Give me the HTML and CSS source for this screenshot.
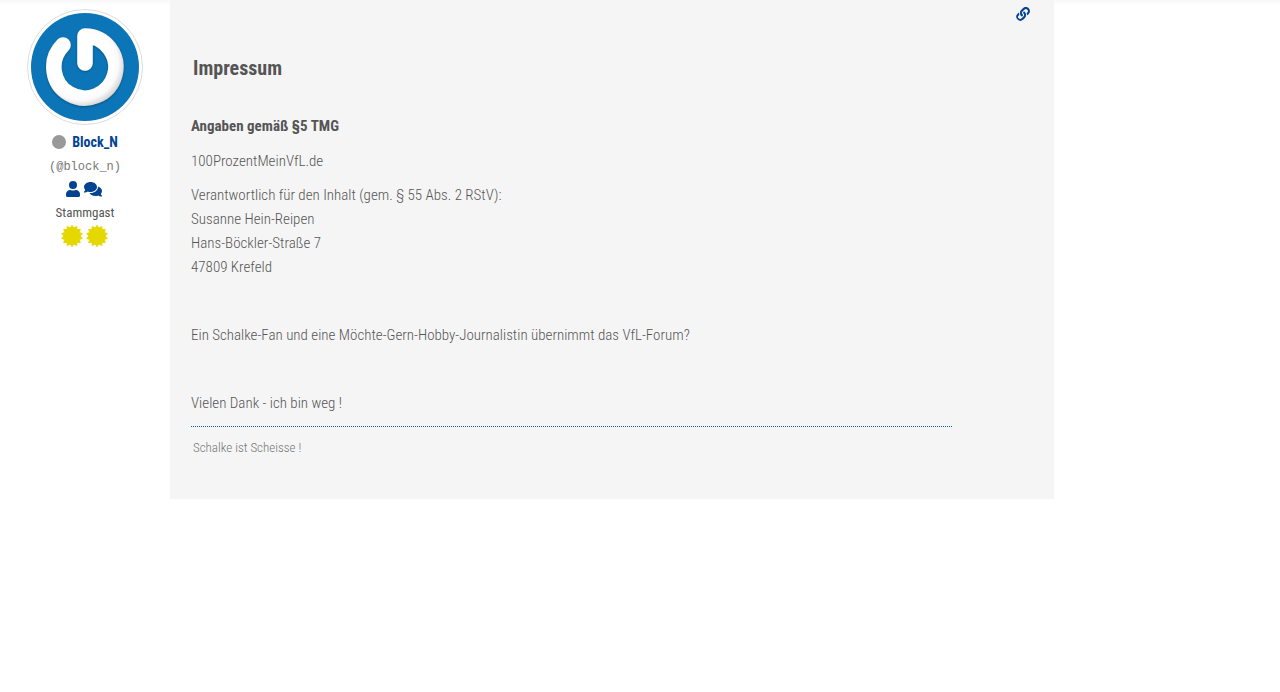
FILE: index.html
```html
<!DOCTYPE html>
<html lang="de">
<head>
<meta charset="utf-8">
<title>Impressum</title>
<link rel="stylesheet" href="styles.css">
</head>
<body>
<article class="post">
  <aside class="author">
    <div class="avatar">
      <svg viewBox="0 0 108 108" role="img" aria-label="Block_N">
        <defs>
          <filter id="shade" x="-20%" y="-20%" width="140%" height="140%">
            <feDropShadow dx="0" dy="1" stdDeviation="1" flood-color="#033a60" flood-opacity=".6"/>
          </filter>
          <radialGradient id="ring" gradientUnits="userSpaceOnUse" cx="50" cy="50" r="44">
            <stop offset=".7" stop-color="#fff"/>
            <stop offset=".85" stop-color="#fafafa"/>
            <stop offset="1" stop-color="#d5d5d5"/>
          </radialGradient>
        </defs>
        <circle cx="54" cy="54" r="54" fill="#0b75b7"/>
        <path d="M32 32A31 31 0 1 0 54 23V50" fill="none" stroke="url(#ring)" stroke-width="15.500" stroke-linecap="round" stroke-linejoin="round" filter="url(#shade)"/>
      </svg>
    </div>
    <div class="name"><span class="status"></span><a href="#">Block_N</a></div>
    <div class="nick">(@block_n)</div>
    <div class="links">
      <a href="#" aria-label="Profil"><svg class="user" viewBox="0 0 448 512"><path d="M224 256a128 128 0 1 0 0-256 128 128 0 0 0 0 256zm90 32h-17a174 174 0 0 1-146 0h-17A134 134 0 0 0 0 422v42c0 27 21 48 48 48h352c27 0 48-21 48-48v-42a134 134 0 0 0-134-134z"/></svg></a>
      <a href="#" aria-label="Beiträge"><svg class="chat" viewBox="0 0 576 512"><path d="M416 192c0-88-93-160-208-160S0 104 0 192c0 34 14 66 38 92-13 30-36 55-36 55a16 16 0 0 0 12 29c44 0 80-16 104-33 27 11 58 17 90 17 115 0 208-72 208-160zm122 220c24-26 38-58 38-92 0-67-54-124-129-148 1 7 1 13 1 20 0 106-108 192-240 192-11 0-21-1-32-2 32 57 106 98 192 98 32 0 63-6 90-17 24 17 60 33 104 33a16 16 0 0 0 12-29s-23-25-36-55z"/></svg></a>
    </div>
    <div class="rank">Stammgast</div>
    <div class="stars">
      <svg viewBox="-12 -12 24 24"><use href="#badge"/></svg>
      <svg viewBox="-12 -12 24 24"><path id="badge" d="M0-10.800 1.800-8 4.700-9.700 5.100-6.400 8.400-6.700 7.400-3.600 10.500-2.400 8.200 0 10.500 2.400 7.400 3.600 8.400 6.700 5.100 6.400 4.700 9.700 1.800 8 0 10.800-1.800 8-4.700 9.700-5.100 6.400-8.400 6.700-7.400 3.600-10.500 2.400-8.200 0-10.500-2.400-7.400-3.600-8.400-6.700-5.100-6.400-4.700-9.700-1.800-8Z" stroke="currentColor" stroke-width=".8" stroke-linejoin="round"/></svg>
    </div>
  </aside>
  <section class="content">
    <a class="permalink" href="#" aria-label="Link zum Beitrag"><svg viewBox="0 0 512 512"><path d="M327 185c59 60 59 155 0 214l-67 67a152 152 0 0 1-214-214l37-37c10-10 27-3 27 11 1 18 4 35 10 52 2 6 1 12-4 17l-13 13a72 72 0 1 0 101 102l67-67a72 72 0 0 0-11-111 16 16 0 0 1-7-13c0-10 3-21 12-29l21-21c5-6 14-6 21-2 7 5 14 11 20 18zM466 46a152 152 0 0 0-214 0l-67 67a152 152 0 0 0 20 232c7 4 16 4 21-2l21-21c9-8 12-19 12-29 0-5-3-10-7-13a72 72 0 0 1-11-111l67-67a72 72 0 1 1 101 102l-13 13c-5 5-6 11-4 17 6 17 9 34 10 52 0 14 17 21 27 11l37-37c59-59 59-155 0-214z"/></svg></a>
    <h1>Impressum</h1>
    <div class="text">
      <h2>Angaben gemäß §5 TMG</h2>
      <p>100ProzentMeinVfL.de</p>
      <p>Verantwortlich für den Inhalt (gem. § 55 Abs. 2 RStV):<br>Susanne Hein-Reipen<br>Hans-Böckler-Straße 7<br>47809 Krefeld</p>
      <p>&nbsp;</p>
      <p>Ein Schalke-Fan und eine Möchte-Gern-Hobby-Journalistin übernimmt das VfL-Forum?</p>
      <p>&nbsp;</p>
      <p>Vielen Dank - ich bin weg !</p>
    </div>
    <footer class="signature">Schalke ist Scheisse !</footer>
  </section>
</article>
</body>
</html>
```
FILE: styles.css
```css
* { box-sizing: border-box; }
body { margin: 0; background: #fff; color: #555; font: 300 15px/24px "Roboto Condensed", "Liberation Sans Narrow", Roboto, sans-serif; }
a { color: #04438f; text-decoration: none; }
svg { display: block; fill: currentColor; }
.post { display: grid; grid-template-columns: 170px minmax(0, 884px); background: linear-gradient(#f8f8f8, #fff 6px); }
.author { display: flex; flex-direction: column; align-items: center; padding-top: 9px; }
.avatar { width: 116px; height: 116px; padding: 3px; border: 1px solid #ddd; border-radius: 50%; background: #fff; }
.name { display: flex; align-items: center; gap: 6px; margin-top: 5px; font-size: 14px; font-weight: 700; }
.status { width: 14px; height: 14px; border-radius: 50%; background: #999; }
.nick { color: #777; font: 12px/26px "Liberation Mono", monospace; }
.links { display: flex; align-items: center; gap: 4px; height: 18px; padding-right: 2px; }
.user { width: 14px; height: 16px; }
.chat { width: 18px; height: 16px; }
.rank { font-size: 13px; font-weight: 400; line-height: 30px; }
.stars { display: flex; gap: 1px; margin-top: -4px; padding-right: 1px; color: #e5d800; }
.stars svg { width: 24px; height: 24px; }
.content { display: flex; flex-direction: column; padding: 7px 24px 39px 21px; background: #f5f5f5; }
.permalink { align-self: flex-end; }
.permalink svg { width: 14px; height: 14px; }
h1 { margin: 33px 2px 32px; font-size: 20px; line-height: 28px; }
.text { margin-right: 78px; padding-bottom: 1px; border-bottom: 1px dotted #0c5cc0; }
h2 { margin: 0 0 11px; font-size: 15px; line-height: 24px; }
p { margin: 0 0 10px; }
.signature { margin: 9px 2px 0; color: #777; font-size: 13px; }
```
